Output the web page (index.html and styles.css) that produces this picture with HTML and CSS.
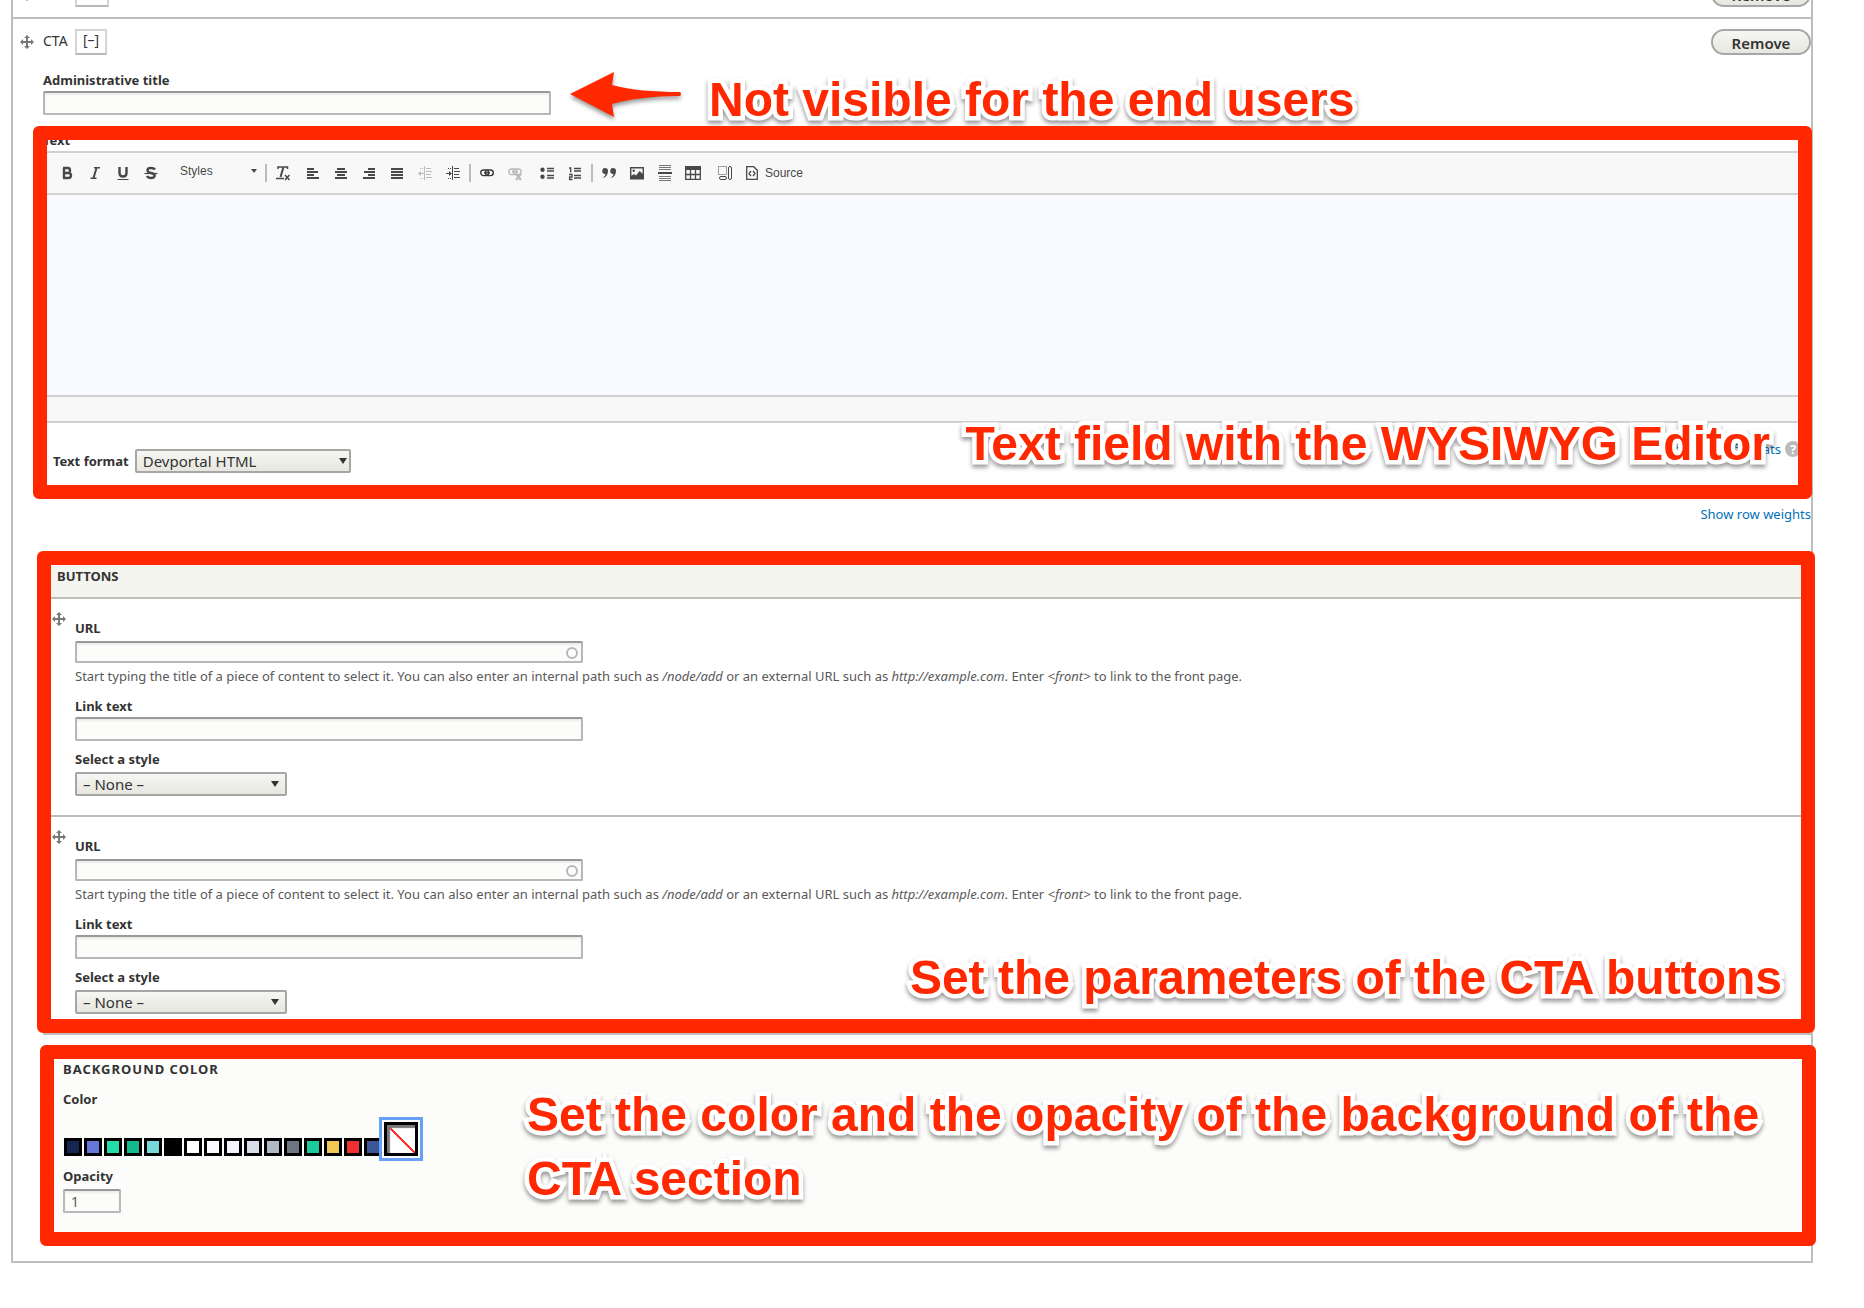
FILE: index.html
```html
<!DOCTYPE html>
<html lang="en">
<head>
<meta charset="utf-8">
<title>Edit page</title>
<link rel="stylesheet" href="styles.css">
</head>
<body>
<svg width="0" height="0" class="sprite" aria-hidden="true">
  <symbol id="move" viewBox="0 0 14 14"><path d="M7 0l3 3H8v3h3V4l3 3-3 3V8H8v3h2l-3 3-3-3h2V8H3v2L0 7l3-3v2h3V3H4z"/></symbol>
  <symbol id="caret" viewBox="0 0 8 6"><path d="M0 0h8L4 6z"/></symbol>
</svg>
<main class="paragraphs">
  <div class="row">
    <div class="row-head">
      <svg class="drag"><use href="#move"/></svg>
      <span class="row-name">CTA</span>
      <button class="toggle toggle-wide" type="button">[+]</button>
      <button class="remove" type="button">Remove</button>
    </div>
  </div>

  <div class="row">
    <div class="row-head">
      <svg class="drag"><use href="#move"/></svg>
      <span class="row-name">CTA</span>
      <button class="toggle" type="button">[–]</button>
      <button class="remove" type="button">Remove</button>
    </div>

    <div class="row-body">
      <section class="admin-section">
        <label for="admin-title">Administrative title</label>
        <input class="text-input" id="admin-title" type="text">
        <div class="note note-admin">
          <svg class="arrow" width="114" height="50" viewBox="0 0 114 50" aria-hidden="true"><path d="M1 23L45 1l-2 13C62 19 84 21 111 21q2 2 0 4C84 25 60 28 43 33l2 13z"/></svg>
          <p>Not visible for the end users</p>
        </div>
      </section>

      <section class="text-section">
        <label for="editor-body">Text</label>
        <div class="editor">
          <div class="toolbar">
            <button type="button" aria-label="Bold"><svg width="16" height="16"><path fill="none" stroke="#484848" stroke-width="2.400" d="M5 3v10M4 3h5q2 0 2 2.500T9 8H5M9 8q3 0 3 2.500T9 13H4"/></svg></button>
            <button type="button" aria-label="Italic"><svg width="16" height="16"><path fill="none" stroke="#484848" stroke-width="2" d="M9.500 3l-3 10"/><path stroke="#484848" stroke-width="1.400" d="M7 2.700h6M3.500 13.300h6"/></svg></button>
            <button type="button" aria-label="Underline"><svg width="16" height="16"><path fill="none" stroke="#484848" stroke-width="2.400" d="M4.500 2v6q0 3.500 3.500 3.500T11.500 8V2"/><path stroke="#484848" d="M2.500 14.500h11"/></svg></button>
            <button type="button" aria-label="Strikethrough"><svg width="16" height="16"><path fill="none" stroke="#484848" stroke-width="2.400" d="M12 4.500Q11 3 8 3 4.500 3 4.500 5.200T8 8t3.700 2.700Q11.500 13 8 13q-3 0-4-2"/><path stroke="#484848" stroke-width="1.200" d="M1.500 8.500h13"/></svg></button>
            <button class="combo" type="button"><span>Styles</span><svg width="6" height="4"><path fill="#484848" d="M0 0h6L3 4z"/></svg></button>
            <span class="sep"></span>
            <button type="button" aria-label="Remove format"><svg width="16" height="16"><path fill="none" stroke="#484848" stroke-width="2" d="M8.500 2l-3 10"/><path fill="none" stroke="#484848" stroke-width="1.500" d="M3 4V2h9.500v2M1 13.500h8M10 10l4.500 5M14.500 10L10 15"/></svg></button>
            <button class="lead" type="button" aria-label="Align left"><svg width="16" height="16"><path stroke="#484848" stroke-width="2" d="M2 4h7M2 7h11M2 10h7M2 13h12"/></svg></button>
            <button type="button" aria-label="Center"><svg width="16" height="16"><path stroke="#484848" stroke-width="2" d="M4 4h8M2 7h12M4 10h8M2 13h12"/></svg></button>
            <button type="button" aria-label="Align right"><svg width="16" height="16"><path stroke="#484848" stroke-width="2" d="M7 4h7M3 7h11M7 10h7M2 13h12"/></svg></button>
            <button type="button" aria-label="Justify"><svg width="16" height="16"><path stroke="#484848" stroke-width="2" d="M2 4h12M2 7h12M2 10h12M2 13h12"/></svg></button>
            <button type="button" aria-label="Decrease indent" disabled><svg width="16" height="16"><path stroke="#484848" d="M7.500 1v14M9 3.500h5M9 6.500h6M9 9.500h5M9 12.500h6M2 8.500h5"/><path stroke="#484848" stroke-dasharray="1 1" d="M3 3.500h4M3 13.500h4"/><path fill="#484848" d="M1 8.500L4 6v5z"/></svg></button>
            <button type="button" aria-label="Increase indent"><svg width="16" height="16"><path stroke="#484848" d="M7.500 1v14M9 3.500h5M9 6.500h6M9 9.500h5M9 12.500h6M1 8.500h5"/><path stroke="#484848" stroke-dasharray="1 1" d="M3 3.500h4M3 13.500h4"/><path fill="#484848" d="M7 8.500L4 6v5z"/></svg></button>
            <span class="sep"></span>
            <button type="button" aria-label="Link"><svg width="16" height="16"><g fill="none" stroke="#3a3a3a" stroke-width="1.400"><rect x="1.700" y="5" width="8" height="5.600" rx="2.800"/><rect x="6.300" y="5" width="8" height="5.600" rx="2.800"/><path d="M5 7.800h6"/></g></svg></button>
            <button type="button" aria-label="Unlink" disabled><svg width="16" height="16"><g fill="none" stroke="#484848" stroke-width="1.400"><rect x="1.800" y="4" width="8" height="5.600" rx="2.800"/><rect x="6.200" y="4" width="8" height="5.600" rx="2.800"/><path d="M5 6.800h6"/><path stroke-width="2" d="M9 9l5 6M14 9l-5 6"/></g></svg></button>
            <button class="lead-wide" type="button" aria-label="Bulleted list"><svg width="16" height="16"><path stroke="#484848" stroke-width="1.500" d="M8 3.500h7M8 6h7M8 10.500h7M8 13h7"/><circle cx="3.500" cy="4.700" r="2.200" fill="#484848"/><circle cx="3.500" cy="11.700" r="2.200" fill="#484848"/></svg></button>
            <button type="button" aria-label="Numbered list"><svg width="16" height="16"><path stroke="#484848" stroke-width="1.300" d="M7 3.500h7M7 6h7M7 10.500h7M7 13h7"/><path fill="none" stroke="#484848" stroke-width="1.300" d="M2 3h1.700v4.500M2 9.500h3V12H2.600v2.500H5.500"/></svg></button>
            <span class="sep"></span>
            <button type="button" aria-label="Block quote"><svg width="16" height="16"><path fill="#484848" d="M4 3a3 3 0 0 1 3 3q0 5-4.500 7V12Q4.500 11 4.500 9A3 3 0 1 1 4 3zM12 3a3 3 0 0 1 3 3q0 5-4.500 7V12q2-1 2-3A3 3 0 1 1 12 3z"/></svg></button>
            <button type="button" aria-label="Image"><svg width="16" height="16"><path fill="none" stroke="#484848" stroke-width="1.400" d="M1.700 2.700h12.600v11H1.700z"/><circle cx="4.700" cy="5.700" r="1.200" fill="#484848"/><path fill="#484848" d="M2 14v-3l3-2 2 1.500L10.500 6 14 9v5z"/></svg></button>
            <button type="button" aria-label="Horizontal line"><svg width="16" height="18"><path stroke="#777" d="M2 1.500h12M2 3.500h12M2 5.500h12M2 12.500h12M2 14.500h12M2 16.500h12"/><path stroke="#484848" stroke-width="2" d="M1 9h14"/></svg></button>
            <button type="button" aria-label="Table"><svg width="16" height="16"><path fill="#484848" d="M0 1h16v4H0z"/><path fill="none" stroke="#484848" stroke-width="1.300" d="M.7 2v12.300h14.600V2M0 9.500h16M5.500 4v10M10.500 4v10"/></svg></button>
            <button class="lead-wide" type="button" aria-label="Layout"><svg width="16" height="16"><path fill="none" stroke="#484848" stroke-dasharray="1 1" d="M1.500 1.500h8v8h-8z"/><rect x="11.500" y="1.500" width="3" height="13" rx="1.500" fill="none" stroke="#484848"/><rect x="2.500" y="11.500" width="7" height="3" rx="1.500" fill="none" stroke="#484848"/></svg></button>
            <button class="source" type="button"><svg width="14" height="16"><path fill="none" stroke="#484848" stroke-width="1.300" d="M1.700 1.700h7l3.600 3.600v9H1.700zM6 6L4 8.500 6 11M8 6l2 2.500L8 11"/></svg><span>Source</span></button>
          </div>
          <textarea id="editor-body" class="editor-body"></textarea>
          <div class="editor-foot"></div>
        </div>
        <div class="format-row">
          <div class="format">
            <label for="format">Text format</label>
            <div class="select format-select">
              <select id="format"><option>Devportal HTML</option></select>
              <svg class="caret"><use href="#caret"/></svg>
            </div>
          </div>
          <a class="help" href="#formats">About text formats<span class="help-icon">?</span></a>
        </div>
        <div class="mark mark-text"></div>
        <p class="note note-text">Text field with the WYSIWYG Editor</p>
      </section>

      <div class="weights"><a href="#weights">Show row weights</a></div>

      <section class="buttons-section">
        <table>
          <thead><tr><th colspan="2">BUTTONS</th></tr></thead>
          <tbody>
            <tr>
              <td class="handle"><svg class="drag"><use href="#move"/></svg></td>
              <td class="fields">
                <label class="url-label" for="url-1">URL</label>
                <div class="url">
                  <input class="text-input" id="url-1" type="text">
                  <span class="throbber"></span>
                </div>
                <p class="description">Start typing the title of a piece of content to select it. You can also enter an internal path such as <em>/node/add</em> or an external URL such as <em>http://example.com</em>. Enter <em>&lt;front&gt;</em> to link to the front page.</p>
                <label for="link-1">Link text</label>
                <input class="text-input" id="link-1" type="text">
                <label class="style-label" for="style-1">Select a style</label>
                <div class="select style-select">
                  <select id="style-1"><option>– None –</option></select>
                  <svg class="caret"><use href="#caret"/></svg>
                </div>
              </td>
            </tr>
            <tr>
              <td class="handle"><svg class="drag"><use href="#move"/></svg></td>
              <td class="fields">
                <label class="url-label" for="url-2">URL</label>
                <div class="url">
                  <input class="text-input" id="url-2" type="text">
                  <span class="throbber"></span>
                </div>
                <p class="description">Start typing the title of a piece of content to select it. You can also enter an internal path such as <em>/node/add</em> or an external URL such as <em>http://example.com</em>. Enter <em>&lt;front&gt;</em> to link to the front page.</p>
                <label for="link-2">Link text</label>
                <input class="text-input" id="link-2" type="text">
                <label class="style-label" for="style-2">Select a style</label>
                <div class="select style-select">
                  <select id="style-2"><option>– None –</option></select>
                  <svg class="caret"><use href="#caret"/></svg>
                </div>
              </td>
            </tr>
          </tbody>
        </table>
        <div class="mark mark-buttons"></div>
        <p class="note note-buttons">Set the parameters of the CTA buttons</p>
      </section>

      <section class="color-section">
        <h3>BACKGROUND COLOR</h3>
        <h4 id="color-label">Color</h4>
        <div class="swatches" role="radiogroup" aria-labelledby="color-label">
          <input type="radio" name="color" aria-label="Navy" style="background-color:#172650">
          <input type="radio" name="color" aria-label="Indigo" style="background-color:#6675d8">
          <input type="radio" name="color" aria-label="Mint" style="background-color:#22dcaa">
          <input type="radio" name="color" aria-label="Green" style="background-color:#12ba8e">
          <input type="radio" name="color" aria-label="Aqua" style="background-color:#76d9da">
          <input type="radio" name="color" aria-label="Black" style="background-color:#000000">
          <input type="radio" name="color" aria-label="White" style="background-color:#ffffff">
          <input type="radio" name="color" aria-label="Ghost white" style="background-color:#f8faff">
          <input type="radio" name="color" aria-label="Pale gray" style="background-color:#f3f4fb">
          <input type="radio" name="color" aria-label="Light gray" style="background-color:#d9dde8">
          <input type="radio" name="color" aria-label="Gray" style="background-color:#b0b8c3">
          <input type="radio" name="color" aria-label="Slate" style="background-color:#6c7680">
          <input type="radio" name="color" aria-label="Emerald" style="background-color:#1bc99d">
          <input type="radio" name="color" aria-label="Yellow" style="background-color:#efc954">
          <input type="radio" name="color" aria-label="Red" style="background-color:#ee3234">
          <input type="radio" name="color" aria-label="Blue" style="background-color:#3d5596">
          <input class="none" type="radio" name="color" aria-label="None" checked>
        </div>
        <label class="opacity-label" for="opacity">Opacity</label>
        <input class="text-input opacity" id="opacity" type="text" value="1">
        <div class="mark mark-color"></div>
        <p class="note note-color">Set the color and the opacity of the background of the CTA section</p>
      </section>
    </div>
  </div>
</main>
</body>
</html>
```
FILE: styles.css
```css
* { box-sizing: border-box; }

body {
  margin: 0;
  background: #fff;
  color: #333;
  font: 13px/16px "Noto Sans", "Open Sans", sans-serif;
  overflow-x: hidden;
}

h3, h4, p { margin: 0; font-size: 13px; }
a { color: #0071b8; text-decoration: none; }
button, input, select, textarea { font-family: inherit; color: inherit; margin: 0; }
.sprite { position: absolute; }

/* The list continues above the top edge of the window */
.paragraphs {
  margin: -29px 51px 0 11px;
  border: solid #bebfb9;
  border-width: 0 2px 2px;
}
.row { padding-top: 10px; }
.row + .row { border-top: 2px solid #bebfb9; padding-bottom: 15px; }
.row:first-child { padding-bottom: 10px; }
.row-head { display: flex; align-items: center; padding-left: 7px; }
.drag { display: block; width: 14px; height: 14px; fill: #787878; }
.row-name { width: 32px; margin-left: 9px; padding-bottom: 3px; font-size: 14px; }
.toggle {
  width: 32px;
  height: 26px;
  padding: 0 0 4px;
  border: 2px solid #d4d4d4;
  border-bottom-color: #b8b8b8;
  background: #fff;
  font-size: 14px;
  line-height: 16px;
}
.toggle-wide { width: 34px; }
.remove {
  width: 100px;
  height: 26px;
  margin-left: auto;
  padding: 2px 0 0;
  border: 2px solid #a6a6a6;
  border-radius: 13px;
  background: linear-gradient(#f6f6f3, #e7e7df);
  font-size: 15px;
  line-height: 16px;
  font-weight: 600;
}
.row-body { margin-left: 30px; }

label, h3, h4 { display: block; font-weight: 700; line-height: 16px; }
label { margin-bottom: 3px; }
.text-input {
  display: block;
  width: 508px;
  height: 24px;
  padding: 0 6px;
  border: 2px solid #b8b8b8;
  border-top-color: #999;
  border-radius: 2px;
  background: #fcfcfa;
  box-shadow: inset 0 2px 2px #ededeb;
  font-size: 14px;
}

.select { display: grid; height: 24px; }
.select select, .select .caret { grid-area: 1 / 1; }
.select select {
  appearance: none;
  padding: 0 6px;
  border: 2px solid #a6a6a6;
  border-radius: 2px;
  background: linear-gradient(#f6f6f3, #e7e7df);
  font-size: 15px;
  line-height: 18px;
}
.caret {
  width: 8px;
  height: 6px;
  margin-right: 4px;
  place-self: center end;
  fill: #333;
  pointer-events: none;
}

.admin-section, .text-section, .buttons-section, .color-section { position: relative; }
.admin-section { padding-top: 17px; }
.text-section { padding: 17px 0 26px; }

.editor { border: 2px solid #d1d1d1; }
.toolbar {
  display: flex;
  align-items: center;
  height: 40px;
  padding-left: 8px;
  background: #f8f8f8;
}
.toolbar button {
  display: flex;
  align-items: center;
  justify-content: center;
  width: 28px;
  height: 28px;
  padding: 0;
  border: 0;
  background: none;
  color: #484848;
  font: 12px/16px "Liberation Sans", Arial, sans-serif;
}
.toolbar button:disabled { opacity: .35; }
.toolbar .combo { width: 98px; padding: 0 6px 4px 15px; justify-content: space-between; }
.toolbar .lead { margin-left: 2px; }
.toolbar .lead-wide { margin-left: 4px; }
.toolbar .source { width: auto; margin-left: 6px; gap: 6px; }
.sep { width: 2px; height: 18px; margin: 0 2px; background: #bcbcbc; }
.editor-body {
  display: block;
  width: 100%;
  height: 204px;
  border: solid #d1d1d1;
  border-width: 2px 0;
  background: #f8faff;
  resize: none;
}
.editor-foot { height: 24px; background: #f8f8f8; }

.format-row { display: flex; justify-content: space-between; padding: 18px 10px 0; }
.format { display: flex; align-items: center; gap: 6px; padding-top: 8px; }
.format label { margin: 0; }
.format-select { width: 216px; }
.help { display: flex; gap: 4px; height: 16px; }
.help-icon {
  width: 16px;
  height: 16px;
  border-radius: 8px;
  background: #bbb;
  color: #fff;
  font-weight: 700;
  text-align: center;
}
.weights { margin: 7px 0 29px; text-align: right; }

.buttons-section { padding-top: 6px; }
table { width: 100%; border-collapse: separate; border-spacing: 0; }
th, td { padding: 0; text-align: left; vertical-align: top; border-bottom: 2px solid #bebfb9; }
th { padding: 11px 14px 13px; background: #f5f5f0; font-weight: 700; }
.handle { width: 32px; padding: 13px 0 0 9px; }
.fields { padding: 21px 0 19px; }
.url-label, .style-label, .opacity-label { margin-bottom: 5px; }
.url { display: grid; width: 508px; }
.url .text-input, .url .throbber { grid-area: 1 / 1; }
.url .text-input { height: 22px; }
.throbber {
  width: 12px;
  height: 12px;
  margin: 2px 5px 0 0;
  place-self: center end;
  border: 2px solid #b8b8b8;
  border-radius: 6px;
}
.description { margin: 5px 0 14px; color: #595959; }
.style-label { margin-top: 10px; }
.style-select { width: 212px; }
.style-select .caret { margin-right: 8px; }

.color-section { margin-top: 10px; padding: 16px 20px 33px; background: #fcfcfa; }
.color-section h3 { letter-spacing: 1px; }
.color-section h4 { margin-top: 14px; }
.swatches { display: flex; align-items: flex-end; gap: 2px; margin: 15px 1px 12px; }
.swatches input {
  appearance: none;
  width: 18px;
  height: 18px;
  border: 3px solid #000;
}
.swatches .none {
  width: 34px;
  height: 34px;
  background: linear-gradient(45deg, transparent 48%, #f33 48%, #f33 52%, transparent 52%) #fff;
  box-shadow: inset 3px 3px 1px #777;
  outline: 3px solid #67a1f7;
  outline-offset: 2px;
}
.opacity { width: 58px; color: #595959; }

/* Call-outs drawn over the form */
.mark { position: absolute; border: 14px solid #ff2800; border-radius: 6px; pointer-events: none; }
.mark-text { inset: 11px -1px 0 -10px; }
.mark-buttons { inset: 0 -4px 2px -6px; }
.mark-color { inset: 0 -5px 0 -3px; }
.note {
  position: absolute;
  color: #ff2800;
  font: bold 48px/64px "Liberation Sans", Helvetica, Arial, sans-serif;
  -webkit-text-stroke: 9px #fff;
  paint-order: stroke fill;
  filter: drop-shadow(0 3px 2px rgba(0, 0, 0, .4));
  pointer-events: none;
}
.note p { font-size: 48px; }
.note-admin { display: flex; align-items: flex-start; gap: 26px; left: 526px; top: 13px; white-space: nowrap; }
.arrow { margin-top: 3px; fill: #ff2800; }
.note-text { right: 41px; top: 297px; }
.note-buttons { right: 29px; top: 395px; }
.note-color { left: 484px; right: 30px; top: 38px; }
```
